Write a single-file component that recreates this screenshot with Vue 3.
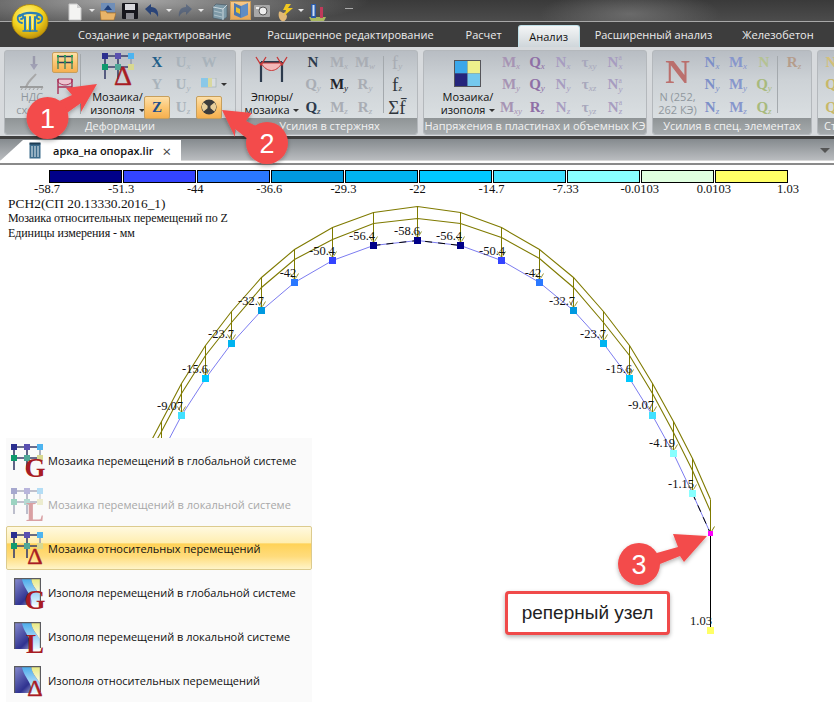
<script setup>
const tabs = [
  { name: "Создание и редактирование", gap: 36 },
  { name: "Расширенное редактирование", gap: 32 },
  { name: "Расчет", gap: 16 },
  { name: "Анализ", gap: 15, active: true },
  { name: "Расширенный анализ", gap: 30 },
  { name: "Железобетон", gap: 0 },
];

const legendColors = ["#000088", "#3344ff", "#2a78ff", "#0099e0", "#00b4f0", "#00c8ff", "#40e0ff", "#88ffff", "#e0ffe0", "#ffff66"];
const legendValues = ["-58.7", "-51.3", "-44", "-36.6", "-29.3", "-22", "-14.7", "-7.33", "-0.0103", "0.0103", "1.03"];

const defGlyphs = [
  { t: "X", c: "#1f5f8a" },
  { t: "U", s: "x", c: "#a9b3bb" },
  { t: "W", c: "#a9b3bb" },
  { t: "Y", c: "#a9b3bb" },
  { t: "U", s: "y", c: "#a9b3bb" },
  { icon: true },
  { t: "Z", c: "#1f4f8a", on: true },
  { t: "U", s: "z", c: "#a9b3bb" },
  { hazard: true, on: true },
];
const barGlyphs = [
  { t: "N", c: "#2c3a4c" },
  { t: "M", s: "x", c: "#a9adb4" },
  { t: "M", s: "w", c: "#a9adb4" },
  { t: "Q", s: "y", c: "#a9adb4" },
  { t: "M", s: "y", c: "#20242c" },
  { t: "R", s: "y", c: "#a9adb4" },
  { t: "Q", s: "z", c: "#2c3a4c" },
  { t: "M", s: "z", c: "#a9adb4" },
  { t: "R", s: "z", c: "#a9adb4" },
];
const plateGlyphs = [
  { t: "M", s: "x", c: "#a794b4" },
  { t: "Q", s: "x", c: "#8f6fa6" },
  { t: "N", s: "x", c: "#a79cc0" },
  { t: "τ", s: "xy", c: "#a8a8bc" },
  { t: "N", s: "x", u: "a", c: "#a79cc0" },
  { t: "M", s: "y", c: "#a794b4" },
  { t: "Q", s: "y", c: "#8f6fa6" },
  { t: "N", s: "y", c: "#a79cc0" },
  { t: "τ", s: "xz", c: "#a8a8bc" },
  { t: "N", s: "y", u: "a", c: "#a79cc0" },
  { t: "M", s: "xy", c: "#a794b4" },
  { t: "R", s: "z", c: "#8f6fa6" },
  { t: "N", s: "z", c: "#a79cc0" },
  { t: "τ", s: "yz", c: "#a8a8bc" },
  { t: "N", s: "z", u: "a", c: "#a79cc0" },
];
const specGlyphs = [
  { t: "N", s: "x", c: "#7c8fc8" },
  { t: "M", s: "x", c: "#8796cc" },
  { t: "N", c: "#b4c292" },
  { t: "N", s: "y", c: "#7c8fc8" },
  { t: "M", s: "y", c: "#8796cc" },
  { t: "Q", s: "y", c: "#a8ba7c" },
  { t: "N", s: "z", c: "#7c8fc8" },
  { t: "M", s: "z", c: "#8796cc" },
  { t: "Q", s: "z", c: "#a8ba7c" },
];

const menuItems = [
  { icon: "#mosaic", letter: "G", text: "Мозаика перемещений в глобальной системе" },
  { icon: "#mosaic", letter: "L", text: "Мозаика перемещений в локальной системе", disabled: true },
  { icon: "#mosaic", letter: "Δ", text: "Мозаика относительных перемещений", active: true },
  { icon: "#iso", letter: "G", text: "Изополя перемещений в глобальной системе" },
  { icon: "#iso", letter: "L", text: "Изополя перемещений в локальной системе" },
  { icon: "#iso", letter: "Δ", text: "Изополя относительных перемещений" },
];

// arch geometry: bottom chord nodes, then two olive chords above it
const nodes = [
  { x: 161, y: 453, c: "#88ffff" },
  { x: 181, y: 415, c: "#40e0ff" },
  { x: 205, y: 378, c: "#00c8ff" },
  { x: 231, y: 343, c: "#00b4f0" },
  { x: 261, y: 310, c: "#0099e0" },
  { x: 294, y: 282, c: "#2a78ff" },
  { x: 332, y: 260, c: "#3344ff" },
  { x: 373, y: 245, c: "#000088" },
  { x: 417, y: 240, c: "#000088" },
  { x: 460, y: 245, c: "#000088" },
  { x: 501, y: 260, c: "#3344ff" },
  { x: 539, y: 282, c: "#2a78ff" },
  { x: 573, y: 310, c: "#0099e0" },
  { x: 603, y: 343, c: "#00b4f0" },
  { x: 629, y: 378, c: "#00c8ff" },
  { x: 652, y: 415, c: "#40e0ff" },
  { x: 673, y: 453, c: "#88ffff" },
  { x: 692, y: 493, c: "#88ffff" },
];
const outerY = [421, 383, 345, 311, 277, 249, 227, 212, 206, 212, 227, 249, 277, 311, 345, 383, 421, 458, 499];
const innerY = [431, 393, 355, 322, 287, 259, 239, 223, 218, 223, 237, 258, 287, 322, 355, 393, 432, 470, 511];
const chordX = [...nodes.map(n => n.x), 710];
const toPoints = ys => chordX.map((x, i) => `${x},${ys[i]}`).join(" ");
const blueLine = [...nodes.map(n => `${n.x},${n.y}`), "710,533"].join(" ");
const outerLine = "152,438 " + toPoints(outerY);
const innerLine = "157,438 " + toPoints(innerY);

const values = [
  { v: "-9.07", x: 170, y: 406 },
  { v: "-15.6", x: 195, y: 369 },
  { v: "-23.7", x: 221, y: 334 },
  { v: "-32.7", x: 251, y: 301 },
  { v: "-42", x: 288, y: 273 },
  { v: "-50.4", x: 322, y: 251 },
  { v: "-56.4", x: 362, y: 236 },
  { v: "-58.6", x: 407, y: 231 },
  { v: "-56.4", x: 449, y: 236 },
  { v: "-50.4", x: 492, y: 251 },
  { v: "-42", x: 533, y: 273 },
  { v: "-32.7", x: 562, y: 301 },
  { v: "-23.7", x: 593, y: 334 },
  { v: "-15.6", x: 619, y: 369 },
  { v: "-9.07", x: 641, y: 405 },
  { v: "-4.19", x: 662, y: 443 },
  { v: "-1.15", x: 681, y: 484 },
  { v: "1.03", x: 701, y: 621 },
];
</script>

<template>
  <div class="app">
    <svg class="hidden-defs" width="0" height="0">
      <defs>
        <symbol id="mosaic" viewBox="0 0 32 30">
          <g stroke="#3a3f6b" stroke-width="1.6" fill="none">
            <path d="M3 3H29M3 14H29" />
            <path d="M3 3V26M16 3V26" />
            <path d="M29 3V16" stroke="#9aa0b0" />
          </g>
          <rect x="0" y="0" width="6" height="6" fill="#2b2f8f" />
          <rect x="13" y="0" width="6" height="6" fill="#5a50b0" />
          <rect x="26" y="0" width="6" height="6" fill="#4db4f0" />
          <rect x="0" y="11" width="6" height="6" fill="#0f9a6e" />
          <rect x="13" y="11" width="6" height="6" fill="#50a898" />
          <rect x="26" y="11" width="6" height="6" fill="#d8d890" />
        </symbol>
        <linearGradient id="isoBlue" x1="0" y1="0" x2="1" y2="1">
          <stop offset="0" stop-color="#8a8fd0" />
          <stop offset="0.6" stop-color="#2f3290" />
          <stop offset="1" stop-color="#e8e8f4" />
        </linearGradient>
        <linearGradient id="isoSky" x1="0" y1="0" x2="0" y2="1">
          <stop offset="0" stop-color="#45a8ea" />
          <stop offset="1" stop-color="#e8f8ff" />
        </linearGradient>
        <linearGradient id="isoYellow" x1="0" y1="0" x2="0" y2="1">
          <stop offset="0" stop-color="#e6e87c" />
          <stop offset="1" stop-color="#ffffff" />
        </linearGradient>
        <radialGradient id="orbFill" cx="0.42" cy="0.3" r="0.75">
          <stop offset="0" stop-color="#fff48a" />
          <stop offset="0.55" stop-color="#f2d21e" />
          <stop offset="1" stop-color="#b88a06" />
        </radialGradient>
        <symbol id="iso" viewBox="0 0 28 28">
          <rect width="28" height="28" fill="url(#isoBlue)" />
          <path d="M8 0H18C18 8 24 12 28 20V28H18C20 18 10 12 8 0Z" fill="url(#isoSky)" />
          <path d="M18 0H28V20C24 12 18 8 18 0Z" fill="url(#isoYellow)" />
          <path d="M1 0.6H27.4V27" fill="none" stroke="#5b5b5f" stroke-width="1.2" />
          <path d="M0.6 0V28" fill="none" stroke="#5b5b5f" stroke-width="1.2" />
        </symbol>
      </defs>
    </svg>

    <header class="titlebar">
      <div class="qat">
        <svg class="qat-item" style="left: 68px" width="14" height="18" viewBox="0 0 14 18">
          <path d="M1 1H9L13 5V17H1Z" fill="#f4f4f2" stroke="#c8c8c8" />
          <path d="M9 1V5H13" fill="#d0d0d0" />
        </svg>
        <span class="qat-arrow" style="left: 89px"></span>
        <svg class="qat-item" style="left: 100px" width="16" height="18" viewBox="0 0 16 18">
          <rect x="1" y="0" width="14" height="9" fill="#6f8eb8" />
          <path d="M8 2L4 7H12Z" fill="#1d3d78" />
          <path d="M0 8H6L7 10H16L14 17H1Z" fill="#e8b468" stroke="#9c6a28" stroke-width=".6" />
        </svg>
        <svg class="qat-item" style="left: 122px" width="16" height="16" viewBox="0 0 16 16">
          <rect width="16" height="16" rx="1" fill="#16161c" />
          <rect x="3" y="1" width="10" height="6" fill="#d8d8dc" />
          <rect x="4" y="10" width="8" height="6" fill="#8a8a90" />
        </svg>
        <svg class="qat-item" style="left: 144px" width="16" height="16" viewBox="0 0 16 16">
          <path d="M1 6L7 1V4C12 4 15 8 14 14C12 10 10 9 7 9V12Z" fill="#2a4478" />
        </svg>
        <span class="qat-arrow" style="left: 166px"></span>
        <svg class="qat-item faded" style="left: 177px" width="16" height="16" viewBox="0 0 16 16">
          <path d="M15 6L9 1V4C4 4 1 8 2 14C4 10 6 9 9 9V12Z" fill="#2f4a78" />
        </svg>
        <span class="qat-arrow" style="left: 198px"></span>
        <svg class="qat-item" style="left: 212px" width="16" height="18" viewBox="0 0 16 18">
          <path d="M4 1L15 2V14L11 17L1 15V4Z" fill="#7e9aa8" stroke="#4a5c68" stroke-width=".7" />
          <path d="M1 4L11 6V17M11 6L15 2" fill="none" stroke="#dfe8ec" stroke-width=".8" />
          <path d="M2 8L10 10M2 12L10 14" stroke="#c6d4da" stroke-width=".7" />
        </svg>
        <div class="qat-on">
          <svg width="18" height="16" viewBox="0 0 18 16">
            <path d="M9 3L2 0V12L9 15Z" fill="#4d78b0" />
            <path d="M9 3L16 0V12L9 15Z" fill="#5f8cc4" />
            <path d="M4 4L8 6V11L4 9Z" fill="#e8c030" />
          </svg>
        </div>
        <svg class="qat-item" style="left: 254px" width="16" height="14" viewBox="0 0 16 14">
          <rect y="2" width="16" height="12" rx="1" fill="#a8a8a8" />
          <circle cx="9" cy="8" r="4" fill="#eee" stroke="#555" />
          <rect x="2" y="4" width="3" height="2" fill="#eee" />
        </svg>
        <svg class="qat-item" style="left: 277px" width="17" height="19" viewBox="0 0 17 19">
          <path d="M2 9C4 7 6 12 8 9L10 13C10 17 7 19 5 18C2 17 1 12 2 9Z" fill="#e0b878" />
          <path d="M9 1L14 1L11 5H16L7 13L9 7H6Z" fill="#f0c820" />
        </svg>
        <span class="qat-arrow" style="left: 298px"></span>
        <svg class="qat-item" style="left: 309px" width="17" height="18" viewBox="0 0 17 18">
          <path d="M0 14H17L15 18H2Z" fill="#a8b860" />
          <rect x="2" y="1" width="5" height="14" fill="#2a5aa8" />
          <rect x="3.5" y="2" width="2" height="11" fill="#cfe0f4" />
          <rect x="11" y="4" width="3" height="11" fill="#c03a5a" />
        </svg>
        <span class="qat-more" style="left: 345px"></span>
      </div>
    </header>

    <nav class="tabs">
      <span v-for="tab in tabs" :key="tab.name" class="tab" :class="{ active: tab.active }" :style="{ marginRight: tab.gap + 'px' }">{{ tab.name }}</span>
    </nav>

    <section class="ribbon">
      <div class="group" style="width: 232px">
        <div class="body">
          <div class="big disabled" style="width: 48px">
            <svg width="40" height="37" viewBox="0 0 40 37">
              <path d="M22 3V13" stroke="#9a9aac" stroke-width="2.4" />
              <path d="M18 11L22 17L26 11Z" fill="#a0a0b4" />
              <path d="M24 21C20 26 16 28 14 34" stroke="#a8a8a8" stroke-width="2" fill="none" />
              <path d="M8 34H31" stroke="#8a8a8a" stroke-width="1.4" />
              <path d="M9 37L11 34M13 37L15 34M17 37L19 34M21 37L23 34M25 37L27 34M29 37L31 34" stroke="#a0a0a0" />
            </svg>
            <span>НДС<br />схема</span>
          </div>
          <div class="stack">
            <div class="tool on">
              <svg width="18" height="15" viewBox="0 0 18 15" fill="none">
                <path d="M2 1.5V14M9 1.5V14M16 1.5V14" stroke="#2c7c5c" stroke-width="1.2" />
                <path d="M1 1.5H17M1 7.5H17" stroke="#26405c" stroke-width="1.4" />
                <path d="M1 1H3M8 1H10M15 1H17M1 7H3M8 7H10M15 7H17" stroke="#28a050" stroke-width="2" />
              </svg>
            </div>
            <div class="tool">
              <svg width="18" height="18" viewBox="0 0 18 18" fill="none">
                <path d="M2 2H16V5C12 9 6 9 2 5Z" fill="#ecc4d0" stroke="#a83058" />
                <path d="M2 10H16M2 2V17M16 2V17" stroke="#a83058" stroke-width="1.4" />
              </svg>
            </div>
          </div>
          <div class="vsep" style="margin: 3px 5px 4px 2px"></div>
          <div class="big" style="width: 58px">
            <svg class="shift" width="58" height="37" viewBox="0 0 58 37">
              <use href="#mosaic" x="13" y="0" width="32" height="30" />
              <text x="34" y="32" class="delta" font-size="28">Δ</text>
            </svg>
            <span class="shift">Мозаика/<br />изополя <i class="drop"></i></span>
          </div>
          <div class="glyphs" style="grid-template-columns: repeat(3, 26px); margin-left: 0">
            <div v-for="(g, i) in defGlyphs" :key="i" class="glyph" :class="{ on: g.on }" :style="{ color: g.c }">
              <template v-if="g.icon">
                <svg width="16" height="14" viewBox="0 0 16 14">
                  <rect width="15" height="9" fill="#d8dce0" stroke="#9aa" stroke-width=".6" />
                  <rect width="7" height="9" fill="#8ac8e8" />
                  <rect x="7" width="4" height="9" fill="#d8d8a0" />
                </svg>
                <i class="drop side"></i>
              </template>
              <svg v-else-if="g.hazard" width="16" height="16" viewBox="0 0 16 16">
                <circle cx="8" cy="8" r="7.6" fill="#3c3c3c" />
                <path d="M8 8L2.6 3.4A7 7 0 0 0 2.6 12.6ZM8 8L13.4 3.4A7 7 0 0 1 13.4 12.6Z" fill="#e8cf9c" />
                <circle cx="8" cy="8" r="1.6" fill="#3c3c3c" />
              </svg>
              <template v-else>{{ g.t }}<sub v-if="g.s">{{ g.s }}</sub></template>
            </div>
          </div>
        </div>
        <div class="label">Деформации</div>
      </div>

      <div class="group" style="width: 177px">
        <div class="body">
          <div class="big" style="width: 56px; margin-left: 2px">
            <svg width="50" height="37" viewBox="0 0 50 37" fill="none">
              <path d="M14 9V29M35 9V29" stroke="#2c3a4c" stroke-width="2.2" />
              <path d="M14 9H35" stroke="#2c3a4c" stroke-width="2" />
              <path d="M14 10C20 20 29 20 35 10Z" fill="#f3b8b8" stroke="#c83838" />
              <path d="M9 4L14 12L19 4M30 4L35 12L40 4" stroke="#c83838" stroke-width="1.3" />
            </svg>
            <span>Эпюры/<br />мозаика <i class="drop"></i></span>
          </div>
          <div class="glyphs" style="grid-template-columns: repeat(3, 26px); margin-left: 0">
            <div v-for="(g, i) in barGlyphs" :key="i" class="glyph" :style="{ color: g.c }">{{ g.t }}<sub>{{ g.s }}</sub></div>
          </div>
          <div class="vsep" style="margin: 5px 3px 5px 5px"></div>
          <div class="glyphs" style="grid-template-columns: 20px">
            <div class="glyph f faint">f<sub>y</sub></div>
            <div class="glyph f">f<sub>z</sub></div>
            <div class="glyph f">Σf̄</div>
          </div>
        </div>
        <div class="label">Усилия в стержнях</div>
      </div>

      <div class="group" style="width: 224px">
        <div class="body">
          <div class="big" style="width: 60px; margin-left: 14px">
            <svg width="30" height="37" viewBox="0 0 30 37">
              <rect x="1" y="7" width="27" height="27" fill="#55555a" />
              <rect x="2" y="8" width="12.5" height="12.5" fill="#3ba7ea" />
              <rect x="14.5" y="8" width="12.5" height="12.5" fill="#eef08c" />
              <rect x="2" y="20.5" width="12.5" height="12.5" fill="#25257c" />
              <rect x="14.5" y="20.5" width="12.5" height="12.5" fill="#74c8ee" />
            </svg>
            <span>Мозаика/<br />изополя <i class="drop"></i></span>
          </div>
          <div class="glyphs" style="grid-template-columns: repeat(5, 26px); margin-left: 0">
            <div v-for="(g, i) in plateGlyphs" :key="i" class="glyph" :style="{ color: g.c }">
              {{ g.t }}<span v-if="g.u" class="supsub"><sup>{{ g.u }}</sup><sub>{{ g.s }}</sub></span><sub v-else>{{ g.s }}</sub>
            </div>
          </div>
        </div>
        <div class="label">Напряжения в пластинах и объемных КЭ</div>
      </div>

      <div class="group" style="width: 160px">
        <div class="body">
          <div class="big disabled bigN" style="width: 43px">
            <b>N</b>
            <span>N (252,<br />262 КЭ)</span>
          </div>
          <div class="glyphs" style="grid-template-columns: repeat(3, 26px); margin-left: 0">
            <div v-for="(g, i) in specGlyphs" :key="i" class="glyph" :style="{ color: g.c }">{{ g.t }}<sub>{{ g.s }}</sub></div>
          </div>
          <div class="vsep" style="margin: 5px 3px 5px 0"></div>
          <div class="glyphs" style="grid-template-columns: 26px">
            <div class="glyph" style="color: #b59d8c">R<sub>z</sub></div>
          </div>
        </div>
        <div class="label">Усилия в спец. элементах</div>
      </div>

      <div class="group" style="width: 60px">
        <div class="body">
          <div class="glyphs" style="grid-template-columns: 26px; margin-left: 0">
            <div class="glyph" style="color: #d4c078">N</div>
            <div class="glyph" style="color: #c8b868">Q</div>
            <div class="glyph" style="color: #c8b868">Q</div>
          </div>
        </div>
        <div class="label left">Ст</div>
      </div>
    </section>

    <div class="docbar">
      <div class="doctab">
        <svg width="12" height="17" viewBox="0 0 12 17">
          <rect x="0.5" y="1.5" width="11" height="15" fill="#3c6c8c" />
          <path d="M3 4V15M6 4V15M9 4V15" stroke="#e8f0f4" />
          <path d="M0.5 1.5H11.5" stroke="#1c3c54" stroke-width="2" />
        </svg>
        <span class="docname">арка_на опорах.lir</span>
        <span class="docclose">×</span>
      </div>
      <span class="docmenu"></span>
    </div>

    <main class="view">
      <div class="legend">
        <span v-for="c in legendColors" :key="c" class="swatch" :style="{ background: c }"></span>
      </div>
      <div class="legend-values">
        <span v-for="v in legendValues" :key="v">{{ v }}</span>
      </div>
      <p class="info first">РСН2(СП 20.13330.2016_1)</p>
      <p class="info">Мозаика относительных перемещений по Z</p>
      <p class="info">Единицы измерения - мм</p>
    </main>

    <svg class="canvas" width="834" height="709" viewBox="0 0 834 709">
      <g transform="translate(.5 .5)">
        <polyline :points="blueLine" fill="none" stroke="#7c7cf0" />
        <path d="M373 245L417 240L460 245M692 493L710 533" fill="none" stroke="#000" stroke-dasharray="7 6" />
        <polyline :points="outerLine" fill="none" stroke="#7f7a00" stroke-width="1.1" />
        <polyline :points="innerLine" fill="none" stroke="#7f7a00" stroke-width="1.1" />
        <g v-for="(n, i) in nodes" :key="i">
          <path :d="`M${n.x} ${outerY[i]}V${n.y}`" stroke="#7f7a00" />
          <path :d="`M${n.x - 4} ${n.y - 9}L${n.x - 1} ${n.y - 4}M${n.x + 4} ${n.y - 9}L${n.x + 1} ${n.y - 4}`" stroke="#7f7a00" stroke-width=".8" />
        </g>
        <path d="M710 499V533M714 526L711 531" stroke="#7f7a00" fill="none" />
        <path d="M710 533V630" stroke="#000" />
      </g>
      <rect v-for="(n, i) in nodes" :key="'n' + i" :x="n.x - 3" :y="n.y - 3" width="7" height="7" :fill="n.c" />
      <rect x="708" y="531" width="5" height="5" fill="#ff00ff" />
      <rect x="707" y="627" width="7" height="7" fill="#ffff66" />
      <text v-for="(v, i) in values" :key="'v' + i" :x="v.x" :y="v.y + 4" class="value">{{ v.v }}</text>
    </svg>

    <ul class="menu">
      <li v-for="item in menuItems" :key="item.text" class="menu-row" :class="{ active: item.active, disabled: item.disabled }">
        <svg width="36" height="36" viewBox="0 0 36 36">
          <use v-if="item.icon === '#mosaic'" href="#mosaic" x="1" y="0" width="32" height="30" />
          <use v-else href="#iso" x="4" y="2" width="27" height="27" />
          <text x="25" :y="item.letter === 'Δ' ? 32 : 33" class="letter" :class="{ thin: item.letter === 'Δ' }" :font-size="item.letter === 'Δ' ? 24 : 27">{{ item.letter }}</text>
        </svg>
        <span>{{ item.text }}</span>
      </li>
    </ul>

    <svg class="orb" width="40" height="38" viewBox="0 0 40 38">
      <ellipse cx="20" cy="19.5" rx="18" ry="17" fill="url(#orbFill)" stroke="#a88208" stroke-width=".8" />
      <g fill="none" stroke="#2b7fb4" stroke-linecap="round">
        <path d="M10 14C14 10 26 10 30 13" stroke-width="2.4" />
        <path d="M12 21C7 20 6 13 11 13C14 13 14 17 11 17" stroke-width="1.8" />
        <path d="M28 21C33 20 34 13 29 13C26 13 26 17 29 17" stroke-width="1.8" />
        <path d="M15 15V28M20 15V29M25 15V28" stroke-width="2" />
        <path d="M13 29H27" stroke-width="1.6" />
      </g>
      <path d="M17.5 16V27M22.5 16V27" stroke="#f6f0a0" stroke-width="1" />
    </svg>

    <svg class="marks" width="834" height="709" viewBox="0 0 834 709">
      <defs>
        <filter id="markShadow" x="-30%" y="-30%" width="160%" height="160%">
          <feDropShadow dx="0" dy="2" stdDeviation="2" flood-color="#000" flood-opacity=".3" />
        </filter>
      </defs>
      <g filter="url(#markShadow)" fill="#f34b4b">
        <path d="M97 84L66 88L72 95L38 111L47 127L81 103L81 112Z" />
        <path d="M222 110L252 113L246 121L274 135L262 150L235 129L235 137Z" />
        <path d="M707 536L673 534L678 547L632 560L640 572L680 556L684 562Z" />
        <circle cx="47.5" cy="118" r="21" />
        <circle cx="267" cy="143" r="21" />
        <circle cx="639" cy="564" r="21" />
      </g>
      <text x="47.5" y="128" class="mark-num">1</text>
      <text x="267" y="153" class="mark-num">2</text>
      <text x="639" y="574" class="mark-num">3</text>
    </svg>

    <div class="callout">реперный узел</div>
  </div>
</template>

<style>
html,
body {
  margin: 0;
  background: #fff;
}
</style>

<style scoped>
.app {
  position: relative;
  width: 834px;
  height: 709px;
  overflow: hidden;
  background: #fff;
  font-family: "Open Sans", "Liberation Sans", sans-serif;
}

.hidden-defs {
  position: absolute;
}

.orb {
  position: absolute;
  left: 10px;
  top: 2px;
}

.titlebar {
  height: 21px;
  background:
    radial-gradient(ellipse 90px 24px at 630px 14px, rgba(130, 130, 130, 0.6), transparent),
    radial-gradient(ellipse 240px 30px at 130px 0, rgba(190, 190, 190, 0.85), transparent),
    linear-gradient(#3a3a3a, #4c4c4c);
  border-bottom: 1px solid #a8a8a8;
}

.qat {
  position: relative;
  height: 21px;
}

.qat-item {
  position: absolute;
  top: 3px;
}

.faded {
  opacity: 0.45;
}

.qat-arrow {
  position: absolute;
  top: 9px;
  width: 0;
  height: 0;
  border-left: 3px solid transparent;
  border-right: 3px solid transparent;
  border-top: 3px solid #e8e8e8;
}

.qat-more {
  position: absolute;
  top: 8px;
  width: 8px;
  height: 5px;
  border-top: 1px solid #aaa;
}

.qat-on {
  position: absolute;
  left: 230px;
  top: 1px;
  width: 21px;
  height: 19px;
  display: flex;
  align-items: center;
  justify-content: center;
  background: linear-gradient(#f6c88a, #e8a858);
  border: 1px solid #c89a58;
  box-sizing: border-box;
}

.tabs {
  height: 25px;
  padding-left: 78px;
  display: flex;
  align-items: center;
  background: #3d3d3d;
  color: #ececec;
  font-size: 11px;
  white-space: nowrap;
}

.tab.active {
  align-self: flex-end;
  height: 22px;
  width: 62px;
  margin-left: 0;
  box-sizing: border-box;
  text-align: center;
  line-height: 21px;
  color: #111;
  background: linear-gradient(#f4f5f6, #cfd6da);
  border: 1px solid #bfe0e8;
  border-bottom: 0;
  border-radius: 3px 3px 0 0;
}

.ribbon {
  height: 92px;
  padding: 3px 0 4px 4px;
  box-sizing: border-box;
  display: flex;
  gap: 5px;
  background: #d7dadd;
  border-bottom: 3px solid #404040;
  overflow: hidden;
}

.group {
  flex: none;
  box-sizing: border-box;
  height: 85px;
  display: flex;
  flex-direction: column;
  border: 1px solid #b4b8bc;
  border-radius: 3px;
  overflow: hidden;
  background: linear-gradient(#b8bdc3, #cdd2d6 35%, #dfe4e6);
}

.body {
  flex: 1;
  display: flex;
  min-height: 0;
}

.label {
  height: 16px;
  line-height: 15px;
  text-align: center;
  font-size: 11px;
  color: #f2f2f2;
  background: linear-gradient(#8f9496, #a6abae);
  white-space: nowrap;
}

.label.left {
  text-align: left;
  padding-left: 6px;
}

.big {
  flex: none;
  display: flex;
  flex-direction: column;
  align-items: center;
  font-size: 11px;
  line-height: 13px;
  color: #111;
  text-align: center;
  padding-top: 2px;
  white-space: nowrap;
}

.big.disabled {
  color: #8f979d;
  margin-left: 3px;
}

.big .shift {
  margin-left: 5px;
  flex: none;
}

.bigN b {
  height: 37px;
  font: bold 34px/38px "Liberation Serif", serif;
  color: #b9605c;
  opacity: 0.85;
}

.drop {
  display: inline-block;
  width: 0;
  height: 0;
  margin: 0 0 2px 1px;
  border-left: 3px solid transparent;
  border-right: 3px solid transparent;
  border-top: 3px solid #333;
}

.drop.side {
  position: absolute;
  right: -5px;
  top: 9px;
}

.stack {
  flex: none;
  width: 26px;
  margin-left: -4px;
  padding-top: 1px;
  display: flex;
  flex-direction: column;
  gap: 2px;
}

.tool {
  height: 21px;
  display: flex;
  align-items: center;
  justify-content: center;
  box-sizing: border-box;
}

.on {
  background: linear-gradient(#fddfa8, #fbc46e 55%, #f5b050);
  border: 1px solid #c79f5c;
  border-radius: 2px;
}

.vsep {
  flex: none;
  width: 1px;
  background: #a4a9ad;
}

.glyphs {
  flex: none;
  display: grid;
  grid-auto-rows: 22.5px;
  align-content: start;
}

.glyph {
  position: relative;
  display: flex;
  align-items: center;
  justify-content: center;
  font: bold 15px/1 "Liberation Serif", serif;
  white-space: nowrap;
}

.glyph sub {
  font-size: 9px;
  font-style: italic;
  font-weight: normal;
  align-self: flex-end;
  line-height: 10px;
  margin-bottom: 3px;
}

.glyph .supsub {
  display: inline-flex;
  flex-direction: column;
  font-size: 9px;
  line-height: 8px;
  font-weight: normal;
}

.glyph .supsub sup,
.glyph .supsub sub {
  margin: 0;
  align-self: flex-start;
  line-height: 8px;
  vertical-align: baseline;
}

.glyph.f {
  font-weight: normal;
  font-size: 19px;
  color: #30363c;
}

.glyph.faint {
  color: #a9adb4;
}

.docbar {
  position: relative;
  height: 21px;
  background: linear-gradient(#858a8e, #b9bcbf);
  border-bottom: 1px solid #d8d8d8;
}

.doctab {
  position: absolute;
  left: 0;
  top: 1px;
  width: 181px;
  height: 21px;
  box-sizing: border-box;
  display: flex;
  align-items: center;
  padding-left: 29px;
  background: #fff;
  clip-path: polygon(0 100%, 23px 0, 100% 0, 100% 100%);
  font-size: 11px;
}

.docname {
  margin-left: 12px;
  font-weight: 600;
  color: #111;
  white-space: nowrap;
}

.docclose {
  margin-left: 9px;
  font-size: 15px;
  color: #444;
}

.docmenu {
  position: absolute;
  right: 4px;
  top: 9px;
  border-left: 5px solid transparent;
  border-right: 5px solid transparent;
  border-top: 5px solid #555;
}

.view {
  padding-top: 5px;
  font-family: "Liberation Serif", serif;
  color: #111;
  border-top: 2px solid #8a8a8a;
  margin-top: 2px;
}

.legend {
  display: flex;
  gap: 1px;
  padding-left: 49px;
}

.swatch {
  width: 71px;
  height: 11px;
  border: 1px solid #000;
}

.legend-values {
  display: grid;
  grid-template-columns: repeat(11, 74.1px);
  margin-left: 10px;
  height: 13px;
  font-size: 12.5px;
  line-height: 13px;
  text-align: center;
}

.info {
  margin: 0;
  padding-left: 8px;
  font-size: 12px;
  letter-spacing: -0.1px;
  line-height: 15px;
  white-space: nowrap;
}

.info.first {
  font-size: 13.4px;
  letter-spacing: 0;
}

.canvas,
.marks {
  position: absolute;
  left: 0;
  top: 0;
  pointer-events: none;
}

.value {
  font: 12.5px "Liberation Serif", serif;
  text-anchor: middle;
  fill: #111;
}

.delta,
.letter {
  font-family: "Liberation Serif", serif;
  font-weight: bold;
  fill: #a81c24;
  text-anchor: middle;
}

.delta,
.letter.thin {
  font-weight: normal;
  stroke: #a81c24;
  stroke-width: 0.4;
}

.menu {
  position: absolute;
  left: 6px;
  top: 438px;
  width: 306px;
  margin: 0;
  padding: 0;
  list-style: none;
  background: #fafafa;
  font-size: 11px;
  color: #111;
}

.menu-row {
  position: relative;
  height: 44px;
  box-sizing: border-box;
  display: flex;
  align-items: center;
  padding-left: 4px;
  gap: 2px;
  white-space: nowrap;
}

.menu-row svg {
  flex: none;
  margin-top: 4px;
}

.menu-row.disabled {
  color: #a8a8a8;
}

.menu-row.disabled svg {
  opacity: 0.4;
}

.menu-row.active {
  background: linear-gradient(#fff9e0, #ffeeb0 38%, #ffd257 40%, #ffdc7c 70%, #fff4c8);
  border: 1px solid #dccb8e;
  border-radius: 2px;
  padding-left: 3px;
  background-clip: padding-box;
}

.mark-num {
  font: 27px "Liberation Sans", sans-serif;
  fill: #fff;
  text-anchor: middle;
}

.callout {
  position: absolute;
  left: 505px;
  top: 591px;
  width: 165px;
  height: 44px;
  box-sizing: border-box;
  display: flex;
  align-items: center;
  justify-content: center;
  background: #fff;
  border: 3px solid #f04a4a;
  border-radius: 4px;
  box-shadow: 0 2px 4px rgba(0, 0, 0, 0.3);
  font: 19px "Liberation Sans", sans-serif;
  color: #222;
}
</style>
